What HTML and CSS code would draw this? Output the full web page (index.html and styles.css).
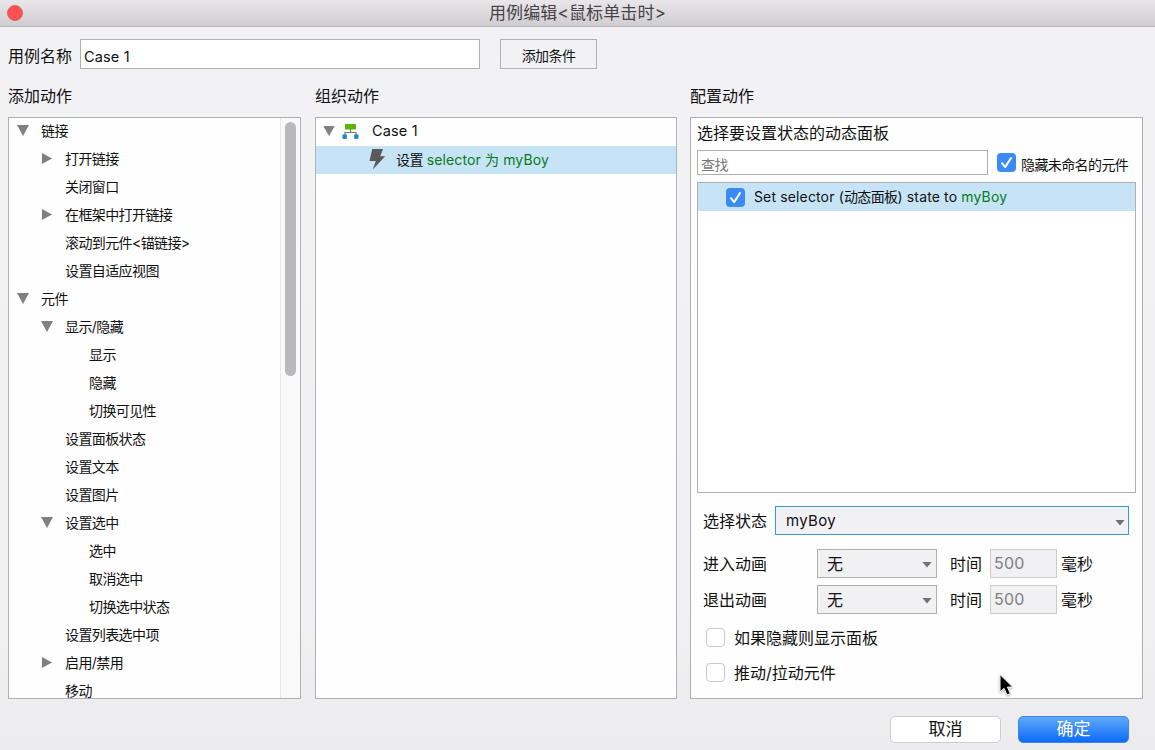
FILE: index.html
```
<!DOCTYPE html>
<html lang="zh-CN">

<head>
    <meta charset="UTF-8">
    <meta name="viewport" content="width=device-width, initial-scale=1.0">
    <title>用例编辑</title>
    <link rel="stylesheet" href="styles.css">
</head>

<body>
    <header class="titlebar">
        <span class="close"></span>
        <h1>用例编辑&lt;鼠标单击时&gt;</h1>
    </header>

    <div class="case-name">
        <label for="caseName">用例名称</label>
        <input type="text" id="caseName" value="Case 1">
        <button type="button" class="add-condition">添加条件</button>
    </div>

    <main class="columns">
        <section>
            <h2>添加动作</h2>
            <div class="panel tree-panel">
                <ul class="tree">
                    <li class="level1 open">链接</li>
                    <li class="level2 closed">打开链接</li>
                    <li class="level2">关闭窗口</li>
                    <li class="level2 closed">在框架中打开链接</li>
                    <li class="level2">滚动到元件&lt;锚链接&gt;</li>
                    <li class="level2">设置自适应视图</li>
                    <li class="level1 open">元件</li>
                    <li class="level2 open">显示/隐藏</li>
                    <li class="level3">显示</li>
                    <li class="level3">隐藏</li>
                    <li class="level3">切换可见性</li>
                    <li class="level2">设置面板状态</li>
                    <li class="level2">设置文本</li>
                    <li class="level2">设置图片</li>
                    <li class="level2 open">设置选中</li>
                    <li class="level3">选中</li>
                    <li class="level3">取消选中</li>
                    <li class="level3">切换选中状态</li>
                    <li class="level2">设置列表选中项</li>
                    <li class="level2 closed">启用/禁用</li>
                    <li class="level2">移动</li>
                </ul>
                <div class="scrollbar">
                    <div class="thumb"></div>
                </div>
            </div>
        </section>

        <section>
            <h2>组织动作</h2>
            <div class="panel">
                <div class="case-row">
                    <svg class="arrow" width="12" height="10" viewBox="0 0 12 10">
                        <path d="M0.3 0h11.4L6 10z" fill="#808080" />
                    </svg>
                    <svg class="case-icon" width="17" height="15" viewBox="0 0 17 15">
                        <path d="M8.5 5v3M3 11V8.5h11V11" fill="none" stroke="#777" stroke-width="1.2" />
                        <rect x="3" y="0" width="11" height="5.5" fill="#5fb30b" />
                        <rect x="0.5" y="10.5" width="4.3" height="4.3" fill="#1288d0" />
                        <rect x="12.2" y="10.5" width="4.3" height="4.3" fill="#1288d0" />
                    </svg>
                    <span>Case 1</span>
                </div>
                <div class="action-row">
                    <svg class="bolt" width="17" height="21" viewBox="0 0 17 21">
                        <path d="M3.2 0H14l-2.8 7.2h5L3.8 20.5 6.8 12H0.5z" fill="#59595b" />
                    </svg>
                    <span><span class="cjk">设置</span> <span class="green">selector 为 myBoy</span></span>
                </div>
            </div>
        </section>

        <section>
            <h2>配置动作</h2>
            <div class="panel config">
                <h3>选择要设置状态的动态面板</h3>
                <div class="search-row">
                    <input type="text" class="search" placeholder="查找">
                    <span class="check checked">
                        <svg width="19" height="19" viewBox="0 0 19 19">
                            <path d="M5 10.2l3.2 3.9L14 5" />
                        </svg>
                    </span>
                    <span class="cjk">隐藏未命名的元件</span>
                </div>

                <div class="widget-list">
                    <div class="widget-row">
                        <span class="check checked">
                            <svg width="19" height="19" viewBox="0 0 19 19">
                                <path d="M5 10.2l3.2 3.9L14 5" />
                            </svg>
                        </span>
                        <span class="text">Set selector (<span class="cjk">动态面板</span>) state to <span class="green">myBoy</span></span>
                    </div>
                </div>

                <div class="state-row">
                    <label>选择状态</label>
                    <div class="select focused">myBoy</div>
                </div>
                <div class="anim-row">
                    <label>进入动画</label>
                    <div class="select">无</div>
                    <label class="time">时间</label>
                    <input type="text" value="500" disabled>
                    <span class="unit">毫秒</span>
                </div>
                <div class="anim-row">
                    <label>退出动画</label>
                    <div class="select">无</div>
                    <label class="time">时间</label>
                    <input type="text" value="500" disabled>
                    <span class="unit">毫秒</span>
                </div>

                <div class="option first">
                    <span class="check"></span>
                    <span class="text">如果隐藏则显示面板</span>
                </div>
                <div class="option">
                    <span class="check"></span>
                    <span class="text">推动/拉动元件</span>
                </div>
            </div>
        </section>
    </main>

    <footer>
        <button type="button">取消</button>
        <button type="button" class="primary">确定</button>
    </footer>

    <svg class="cursor" width="18" height="26" viewBox="0 0 18 26">
        <path d="M2 1.5v17.5l4-3.6 3.1 6.6 3.3-1.5-3-6.4h5.3z" fill="#000" stroke="#fff" stroke-width="1" />
    </svg>
</body>

</html>
```
FILE: styles.css
```
* {
    box-sizing: border-box;
}

body {
    margin: 0;
    height: 750px;
    overflow: hidden;
    background: linear-gradient(#f2f1f4 0, #f1f0f3 600px, #ececee 750px);
    font-family: Inter, "Noto Sans CJK SC", sans-serif;
    font-size: 14px;
    color: #111;
}

h1,
h2,
h3 {
    margin: 0;
    font-weight: normal;
}

input,
button {
    font-family: inherit;
    color: inherit;
    border-radius: 0;
    outline: none;
}

.cjk {
    letter-spacing: -0.6px;
}

.green {
    color: #087a1b;
}

/* title bar */
.titlebar {
    display: flex;
    align-items: center;
    height: 27px;
    padding-left: 7px;
    background: linear-gradient(#e9e7e9, #cfcdcf);
    border-bottom: 1px solid #b3b1b3;
}

.close {
    width: 16px;
    height: 16px;
    border-radius: 50%;
    background: #fc524f;
    border: 1px solid #e2605e;
}

.titlebar h1 {
    flex: 1;
    padding-right: 23px;
    text-align: center;
    font-size: 17px;
    line-height: 26px;
    letter-spacing: 0.15px;
    color: #454446;
}

.titlebar h1,
.titlebar .close {
    margin-left: 0;
}

/* case name */
.case-name {
    display: flex;
    align-items: center;
    height: 30px;
    margin: 12px 0 0 8px;
    font-size: 16px;
}

.case-name label {
    width: 72px;
    padding-top: 2px;
}

.case-name input {
    width: 400px;
    height: 30px;
    padding: 5px 3px 0;
    border: 1px solid #b0afb1;
    background: #fff;
    font-size: 14.5px;
    letter-spacing: 0.15px;
}

.add-condition {
    width: 97px;
    height: 30px;
    margin-left: 20px;
    padding: 1px 0 0;
    border: 1px solid #b0afb1;
    background: #f2f1f4;
    font-size: 14px;
    letter-spacing: -0.6px;
}

/* columns */
.columns {
    display: grid;
    grid-template-columns: 293px 362px 453px;
    column-gap: 14px;
    margin: 14px 0 0 8px;
}

.columns section:last-child {
    margin-left: -1px;
    margin-right: 1px;
    width: 453px;
}

h2 {
    height: 34px;
    line-height: 27px;
    font-size: 16px;
}

.panel {
    height: 582px;
    border: 1px solid #b0afb1;
    background: #fefefe;
    overflow: hidden;
}

/* action tree */
.tree-panel {
    display: flex;
}

.tree {
    flex: 1;
    margin: -2px 0 0;
    padding: 0;
    list-style: none;
    letter-spacing: -0.6px;
}

.tree li {
    display: flex;
    align-items: center;
    height: 28px;
}

.tree li::before {
    content: "";
    width: 12px;
    height: 11px;
    margin-right: 12px;
    margin-top: 1px;
}

.tree .open::before {
    background: #808080;
    clip-path: polygon(0 0, 100% 0, 50% 100%);
}

.tree .closed::before {
    background: #808080;
    clip-path: polygon(8% 0, 92% 50%, 8% 100%);
}

.level1 {
    padding-left: 8px;
}

.level2 {
    padding-left: 32px;
}

.level3 {
    padding-left: 56px;
}

.scrollbar {
    width: 20px;
    padding: 4px 0 0 4px;
    background: #f9f9fa;
    border-left: 1px solid #e8e8e9;
}

.thumb {
    width: 11px;
    height: 254px;
    border-radius: 6px;
    background: #b9b8ba;
}

/* case organizer */
.case-row,
.action-row {
    display: flex;
    align-items: center;
    height: 28px;
}

.case-row {
    padding: 0 0 3px 7px;
    font-size: 14.5px;
    letter-spacing: 0.15px;
}

.case-icon {
    margin: 1px 13px 0 7px;
}

.action-row {
    padding: 0 0 2px 53px;
    background: #c6e4f6;
}

.action-row .green {
    letter-spacing: 0.12px;
}

.bolt {
    margin-right: 10px;
}

/* config */
.config {
    padding: 0 6px;
}

h3 {
    height: 32px;
    line-height: 31px;
    font-size: 16px;
}

.search-row {
    display: flex;
    align-items: center;
    height: 25px;
}

.search {
    width: 291px;
    height: 25px;
    margin-right: 9px;
    padding: 3px 3px 0;
    border: 1px solid #b0afb1;
    background: #fff;
    font-size: 14px;
    letter-spacing: -0.6px;
}

.search::placeholder {
    color: #777;
}

.search-row .cjk {
    margin-left: 5px;
    padding-top: 2px;
}

.check {
    flex: none;
    width: 19px;
    height: 19px;
    border: 1px solid #c9c8ca;
    border-radius: 4px;
    background: #fff;
}

.check.checked {
    border: 0;
    background: #3b8bf6;
}

.check svg {
    display: block;
    fill: none;
    stroke: #fff;
    stroke-width: 2;
    stroke-linecap: round;
    stroke-linejoin: round;
}

.widget-list {
    width: 439px;
    height: 311px;
    margin-top: 7px;
    border: 1px solid #b0afb1;
    background: #fff;
}

.widget-row {
    display: flex;
    align-items: center;
    height: 28px;
    padding-left: 28px;
    background: #c6e4f6;
}

.widget-row .check {
    margin-right: 9px;
}

.widget-row .text {
    padding-bottom: 2px;
    letter-spacing: 0.14px;
}

.widget-row .cjk {
    letter-spacing: -0.6px;
}

.state-row,
.anim-row {
    display: flex;
    align-items: center;
    height: 29px;
    padding-left: 6px;
    font-size: 16px;
}

.state-row {
    margin: 13px 0 14px;
}

.anim-row {
    margin-bottom: 7px;
}

.state-row label {
    width: 72px;
    padding-bottom: 1px;
}

.anim-row label {
    width: 114px;
    padding-bottom: 2px;
}

.anim-row .time {
    width: 40px;
    margin-left: 13px;
}

.anim-row .unit {
    padding-bottom: 2px;
}

.select {
    display: flex;
    align-items: center;
    justify-content: space-between;
    width: 120px;
    height: 29px;
    padding: 0 4px 2px 9px;
    border: 1px solid #b0afb1;
    background: #f1f0f3;
}

.select::after {
    content: "";
    width: 10px;
    height: 6px;
    margin-top: 4px;
    background: #717073;
    clip-path: polygon(0 0, 100% 0, 50% 100%);
}

.select.focused {
    width: 354px;
    padding: 0 3px 0 10px;
    border-color: #3d98cb;
    font-size: 15px;
    letter-spacing: 0.3px;
}

.anim-row input {
    width: 67px;
    height: 29px;
    margin-right: 4px;
    padding: 0 3px 1px;
    border: 1px solid #cbcacc;
    background: #f1f0f3;
    color: #808080;
    font-size: 16px;
    letter-spacing: 0.2px;
}

.option {
    display: flex;
    align-items: center;
    height: 35px;
    padding-left: 9px;
    font-size: 16px;
}

.option.first {
    margin-top: -1px;
}

.option .check {
    margin-right: 9px;
}

.option .text {
    padding-bottom: 2px;
}

/* dialog buttons */
footer {
    display: flex;
    justify-content: flex-end;
    gap: 17px;
    padding: 17px 26px 0 0;
}

footer button {
    width: 111px;
    height: 27px;
    padding: 0;
    border: 1px solid #cdccce;
    border-radius: 5px;
    background: #fff;
    font-size: 17px;
    line-height: 23px;
}

footer .primary {
    border-color: #3a86ea;
    background: linear-gradient(#5fa8fa, #0c6bf8);
    color: #fff;
}

/* mouse pointer above the dialog */
.cursor {
    position: absolute;
    left: 998px;
    top: 673px;
    filter: drop-shadow(0 1px 1px rgba(0, 0, 0, 0.35));
}
```
